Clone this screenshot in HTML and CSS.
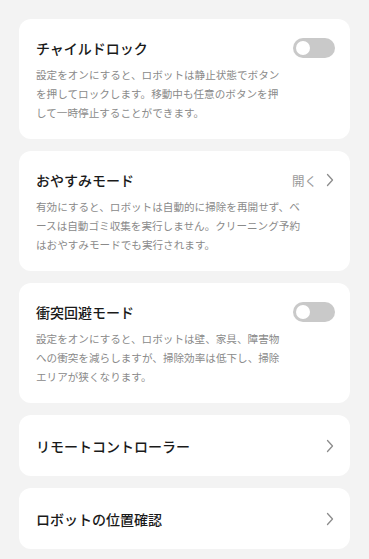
FILE: index.html
```html
<!DOCTYPE html>
<html lang="ja">
<head>
  <meta charset="UTF-8" />
  <meta name="viewport" content="width=device-width, initial-scale=1.0" />
  <title>設定</title>
  <link rel="stylesheet" href="styles.css">
</head>
<body>
  <div class="card">
    <div class="row">
      <span class="title">チャイルドロック</span>
      <span class="switch"><span class="knob"></span></span>
    </div>
    <p class="desc">設定をオンにすると、ロボットは静止状態でボタン<br>を押してロックします。移動中も任意のボタンを押<br>して一時停止することができます。</p>
  </div>

  <div class="card">
    <div class="row">
      <span class="title">おやすみモード</span>
      <span class="action">開く
        <svg class="chevron" viewBox="0 0 8 14" width="8" height="14"><path d="M1.5 1.5 L6.5 7 L1.5 12.5" /></svg>
      </span>
    </div>
    <p class="desc">有効にすると、ロボットは自動的に掃除を再開せず、ベ<br>ースは自動ゴミ収集を実行しません。クリーニング予約<br>はおやすみモードでも実行されます。</p>
  </div>

  <div class="card">
    <div class="row">
      <span class="title">衝突回避モード</span>
      <span class="switch"><span class="knob"></span></span>
    </div>
    <p class="desc">設定をオンにすると、ロボットは壁、家具、障害物<br>への衝突を減らしますが、掃除効率は低下し、掃除<br>エリアが狭くなります。</p>
  </div>

  <div class="card card-link">
    <div class="row">
      <span class="title">リモートコントローラー</span>
      <svg class="chevron" viewBox="0 0 8 14" width="8" height="14"><path d="M1.5 1.5 L6.5 7 L1.5 12.5" /></svg>
    </div>
  </div>

  <div class="card card-link">
    <div class="row">
      <span class="title">ロボットの位置確認</span>
      <svg class="chevron" viewBox="0 0 8 14" width="8" height="14"><path d="M1.5 1.5 L6.5 7 L1.5 12.5" /></svg>
    </div>
  </div>
</body>
</html>
```

FILE: styles.css
```css
html, body {
  margin: 0;
  padding: 0;
  background: #f3f3f3;
  font-family: 'Noto Sans CJK JP', 'Noto Sans', sans-serif;
  color: #1a1a1a;
}

body {
  padding: 19px;
  display: flex;
  flex-direction: column;
  gap: 12px;
}

.card {
  background: #ffffff;
  border-radius: 12px;
  padding: 19px 15px 17px 17px;
}

.card-link {
  padding-top: 20px;
  padding-bottom: 20px;
}

.row {
  display: flex;
  align-items: center;
  justify-content: space-between;
  height: 20px;
}

.card-link .row {
  height: 21px;
}

.title {
  font-size: 14px;
  font-weight: 500;
  line-height: 20px;
  white-space: nowrap;
}

.desc {
  margin: 7px 0 0;
  font-size: 10.6px;
  line-height: 19px;
  color: #8a8a8a;
  white-space: nowrap;
}

.switch {
  width: 42px;
  height: 20px;
  border-radius: 10px;
  background: #c9c9c9;
  display: flex;
  align-items: center;
  padding: 0 3px;
  box-sizing: border-box;
}

.knob {
  width: 14px;
  height: 14px;
  border-radius: 50%;
  background: #ffffff;
}

.action {
  display: flex;
  align-items: center;
  gap: 9px;
  font-size: 12.5px;
  color: #9a9a9a;
}

.chevron {
  fill: none;
  stroke: #8c8c8c;
  stroke-width: 1.3;
  stroke-linecap: round;
  stroke-linejoin: round;
  margin-right: 1px;
}
```
